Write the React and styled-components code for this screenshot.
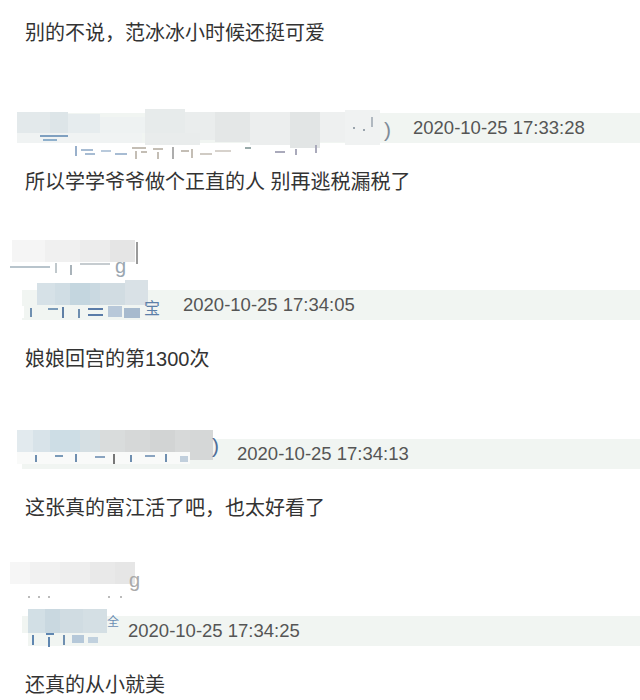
import React from 'react'
import styled, { createGlobalStyle } from 'styled-components'

const GlobalStyle = createGlobalStyle`
  html, body {
    margin: 0;
    padding: 0;
    background: #fff;
  }
  body {
    font-family: "Liberation Sans", "Noto Sans CJK SC", sans-serif;
  }
`

const Page = styled.div`
  width: 640px;
  height: 700px;
  overflow: hidden;
  box-sizing: border-box;
  padding-top: 21px;
`

const Body = styled.p`
  margin: 0;
  padding-left: 25px;
  font-size: 20px;
  line-height: 24px;
  color: #333;
  white-space: nowrap;
`

const Meta = styled.div`
  display: flex;
  align-items: center;
  height: 30px;
  margin: ${p => 68 + (p.$lines - 1) * 28}px 0 27px 22px;
  background: #f1f5f2;
`

const NameSlot = styled.div`
  position: relative;
  flex: none;
  width: ${p => p.$width}px;
  height: 100%;
`

const Redaction = styled.svg`
  position: absolute;
  display: block;
  overflow: visible;
`

const Time = styled.span`
  margin-left: 20px;
  font-size: 18.5px;
  color: #555;
  white-space: nowrap;
`

// a pixelated (blurred) username drawn over the name slot
const Mosaic = ({ box, rects, glyphs = [] }) => (
  <Redaction
    width={box.w}
    height={box.h}
    viewBox={`0 0 ${box.w} ${box.h}`}
    shapeRendering="crispEdges"
    style={{ left: box.x, top: box.y }}
  >
    {rects.map(([x, y, w, h, fill, o = 1], i) => (
      <rect key={i} x={x} y={y} width={w} height={h} fill={fill} opacity={o} />
    ))}
    {glyphs.map(([x, y, t, fill, size], i) => (
      <text
        key={i}
        x={x}
        y={y}
        fill={fill}
        fontSize={size}
        fontFamily='"Liberation Sans", "Noto Sans CJK SC", sans-serif'
      >
        {t}
      </text>
    ))}
  </Redaction>
)

const comments = [
  {
    name: 371,
    lines: 1,
    time: '2020-10-25 17:33:28',
    text: '所以学学爷爷做个正直的人 别再逃税漏税了',
    box: { x: -7, y: -8, w: 380, h: 57 },
    rects: [
      [2, 7, 33, 21, '#e3e9eb'],
      [35, 7, 18, 21, '#dde5e8'],
      [53, 9, 32, 19, '#e6ecee'],
      [85, 12, 45, 16, '#eef2f2'],
      [130, 4, 40, 24, '#e7ebeb'],
      [170, 7, 30, 28, '#eaeded'],
      [200, 7, 35, 30, '#e4e7e7'],
      [235, 7, 40, 33, '#eceeee'],
      [275, 7, 30, 36, '#e2e5e5'],
      [305, 7, 25, 30, '#eef0f0'],
      [330, 5, 35, 35, '#f0f2f2'],
      [2, 28, 125, 10, '#f0f3f3'],
      [130, 28, 55, 12, '#e9ecec'],
      [25, 30, 28, 1.5, '#7fa0c0'],
      [28, 34, 14, 1.5, '#8fb0cc'],
      [60, 41, 2, 10, '#6d8fb5', 0.7],
      [66, 44, 12, 2, '#6d8fb5', 0.6],
      [70, 48, 10, 2, '#6d8fb5', 0.6],
      [86, 45, 10, 2, '#8aa6c4', 0.6],
      [100, 48, 12, 1.5, '#6d8fb5', 0.6],
      [117, 42, 14, 2, '#8a7d6b', 0.5],
      [120, 46, 2, 8, '#8a7d6b', 0.5],
      [126, 46, 6, 2, '#8a7d6b', 0.5],
      [138, 43, 10, 2, '#8a7d6b', 0.5],
      [142, 47, 2, 7, '#8a7d6b', 0.5],
      [157, 42, 1.5, 12, '#8a8a8a', 0.7],
      [166, 45, 8, 2, '#8a7d6b', 0.5],
      [176, 44, 2, 9, '#8a7d6b', 0.5],
      [185, 48, 12, 2, '#8a7d6b', 0.4],
      [200, 45, 16, 2, '#9a8f80', 0.4],
      [230, 42, 6, 1.5, '#9aa'],
      [260, 46, 10, 1.5, '#aab'],
      [280, 44, 1.5, 6, '#aab'],
      [300, 40, 1.5, 8, '#aab'],
      [338, 22, 2, 2, '#9aa4ad'],
      [348, 24, 2, 2, '#9aa4ad'],
      [356, 12, 2, 10, '#b0b8c0'],
    ],
    glyphs: [[369, 32, ')', '#7f8c98', 21]],
  },
  {
    name: 141,
    lines: 2,
    time: '2020-10-25 17:34:05',
    text: '娘娘回宫的第1300次',
    box: { x: -22, y: -52, w: 165, h: 85 },
    rects: [
      [12, 2, 33, 22, '#f5f5f5'],
      [45, 2, 35, 22, '#f0f0f0'],
      [80, 2, 30, 22, '#ececec'],
      [110, 2, 25, 22, '#e5e5e5'],
      [136, 4, 1.5, 22, '#9a9a9a'],
      [10, 28, 40, 1.5, '#b8c4cc'],
      [55, 25, 1.5, 10, '#c0c8cc'],
      [70, 27, 1.5, 10, '#a9b3ba'],
      [80, 25, 30, 1.5, '#c6ccd0'],
      [37, 45, 18, 22, '#d6e1e7'],
      [55, 45, 15, 22, '#d0dde4'],
      [70, 45, 20, 22, '#c4d6df'],
      [90, 45, 10, 22, '#cad9e1'],
      [100, 45, 25, 22, '#d1dce2'],
      [125, 42, 23, 25, '#d9e1e6'],
      [0, 68, 24, 12, '#ffffff'],
      [30, 70, 1.5, 9, '#6f8fb0'],
      [48, 70, 10, 1.5, '#7a9ab8'],
      [62, 69, 1.5, 11, '#5f7fa5'],
      [78, 71, 1.5, 9, '#6f8fb0'],
      [88, 70, 15, 1.5, '#5a7ca8'],
      [88, 76, 15, 1.5, '#5a7ca8'],
      [108, 68, 14, 11, '#7f9cc0', 0.5],
      [124, 70, 16, 10, '#5e80aa', 0.5],
    ],
    glyphs: [
      [115, 35, 'g', '#9aa6b0', 20],
      [144, 76, '宝', '#5b7fa8', 16],
    ],
  },
  {
    name: 195,
    lines: 1,
    time: '2020-10-25 17:34:13',
    text: '这张真的富江活了吧，也太好看了',
    box: { x: -7, y: -11, w: 210, h: 42 },
    rects: [
      [2, 2, 16, 22, '#e2eaee'],
      [18, 2, 17, 22, '#d8e3e9'],
      [35, 2, 30, 22, '#cddde5'],
      [65, 2, 20, 22, '#d5dfe3'],
      [85, 2, 25, 22, '#d9dcdc'],
      [110, 2, 25, 22, '#d6d8d8'],
      [135, 2, 25, 22, '#d2d4d4'],
      [160, 2, 15, 24, '#d7d9d9'],
      [175, 2, 23, 30, '#d5d7d7'],
      [2, 24, 173, 12, '#f9faf9'],
      [20, 27, 1.5, 7, '#6f8fb0'],
      [40, 27, 8, 1.5, '#7a9ab8'],
      [60, 26, 1.5, 8, '#6f8fb0'],
      [80, 28, 10, 1.5, '#8aa4c0'],
      [98, 26, 1.5, 10, '#777'],
      [115, 27, 1.5, 7, '#6f8fb0'],
      [130, 27, 10, 1.5, '#8aa4c0'],
      [150, 26, 1.5, 8, '#6f8fb0'],
      [165, 28, 8, 6, '#8aa4c0', 0.5],
    ],
    glyphs: [[197, 25, ')', '#4f6f99', 21]],
  },
  {
    name: 86,
    lines: 2,
    time: '2020-10-25 17:34:25',
    text: '还真的从小就美',
    box: { x: -14, y: -57, w: 140, h: 90 },
    rects: [
      [2, 3, 20, 22, '#f6f6f6'],
      [22, 3, 30, 22, '#f1f1f1'],
      [52, 3, 30, 22, '#eeeeee'],
      [82, 3, 25, 22, '#e9e9e9'],
      [107, 3, 20, 22, '#e6e6e6'],
      [20, 37, 2, 2, '#bbb'],
      [30, 37, 2, 2, '#bbb'],
      [40, 37, 2, 2, '#bbb'],
      [100, 37, 2, 2, '#bbb'],
      [112, 37, 2, 2, '#bbb'],
      [20, 50, 17, 24, '#d2dfe5'],
      [37, 50, 15, 24, '#c9d8e0'],
      [52, 50, 23, 24, '#d0dce2'],
      [75, 50, 24, 24, '#d4dfe4'],
      [14, 74, 6, 14, '#ffffff'],
      [24, 76, 1.5, 10, '#5f86b0'],
      [38, 74, 8, 1.5, '#5f86b0'],
      [40, 78, 1.5, 10, '#5f86b0'],
      [55, 76, 1.5, 10, '#6f8fb0'],
      [64, 76, 12, 8, '#7a9cc0', 0.5],
      [80, 78, 10, 6, '#7a9cc0', 0.4],
    ],
    glyphs: [
      [121, 28, 'g', '#aaaaaa', 20],
      [99, 67, '全', '#6b8db4', 12],
    ],
  },
]

const Comment = ({ c }) => (
  <>
    <Meta $lines={c.lines}>
      <NameSlot $width={c.name}>
        <Mosaic box={c.box} rects={c.rects} glyphs={c.glyphs} />
      </NameSlot>
      <Time>{c.time}</Time>
    </Meta>
    <Body>{c.text}</Body>
  </>
)

export default function App() {
  return (
    <Page>
      <GlobalStyle />
      <Body>别的不说，范冰冰小时候还挺可爱</Body>
      {comments.map(c => (
        <Comment key={c.time} c={c} />
      ))}
    </Page>
  )
}
